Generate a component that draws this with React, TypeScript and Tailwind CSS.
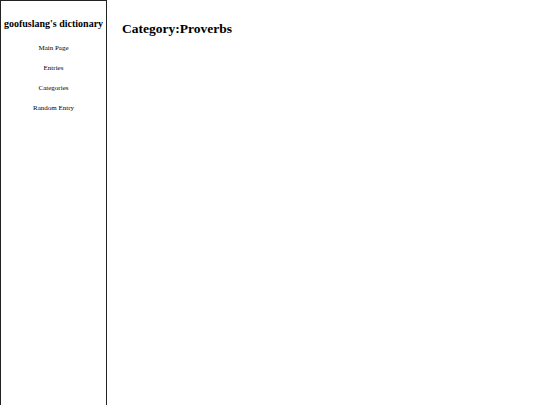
export default function App() {
  return (
    <div className="flex h-[405px] w-[540px] overflow-hidden bg-white text-black" style={{ fontFamily: '"Liberation Serif", serif' }}>
      <div className="flex h-[420px] w-[107px] shrink-0 flex-col items-center border-l border-r border-t border-[#222]">
        <div className="mt-[17px] text-[10px] font-bold leading-[12px] whitespace-nowrap">goofuslang's dictionary</div>
        <div className="mt-[13px] flex flex-col items-center gap-[10px] text-[7px] leading-[10px]">
          <div>Main Page</div>
          <div>Entries</div>
          <div>Categories</div>
          <div>Random Entry</div>
        </div>
      </div>
      <div className="pl-[15px] pt-[21px]">
        <h1 className="text-[13.5px] font-bold leading-[16px] whitespace-nowrap">Category:Proverbs</h1>
      </div>
    </div>
  );
}
